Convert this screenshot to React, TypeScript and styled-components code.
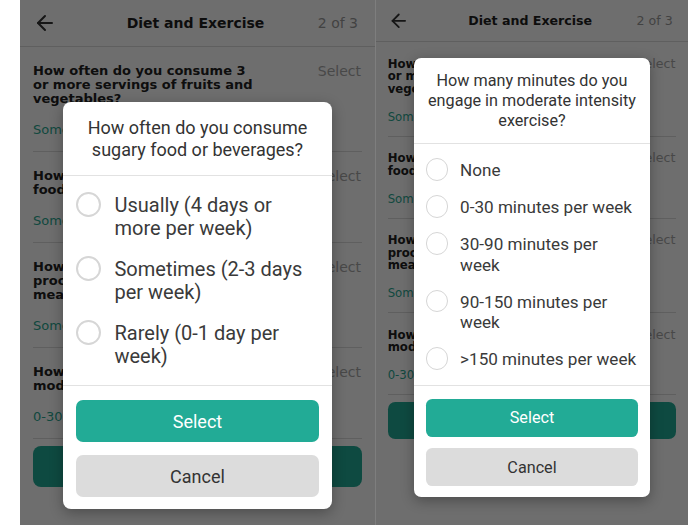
import React from "react";
import styled, { createGlobalStyle } from "styled-components";
import { ArrowLeft } from "lucide-react";

const GlobalStyle = createGlobalStyle`
  html, body {
    margin: 0;
    padding: 0;
    background: #fff;
  }
  body {
    font-family: Roboto, "Liberation Sans", sans-serif;
  }
`;

const questions = [
  {
    text: "How often do you consume 3\nor more servings of fruits and\nvegetables?",
    answer: "Sometimes (2-3 days per week)"
  },
  {
    text: "How often do you eat sugary\nfood or beverages?",
    answer: "Sometimes (2-3 days per week)"
  },
  {
    text: "How often do you eat\nprocessed or red\nmeat?",
    answer: "Sometimes (2-3 days per week)"
  },
  {
    text: "How many minutes of\nmoderate exercise?",
    answer: "0-30 minutes per week"
  }
];

const Page = styled.div`
  display: flex;
  height: 525px;
  padding-left: 20px;
  overflow: hidden;
`;

const Divider = styled.div`
  width: 1px;
  height: 525px;
  background: #7e7e7e;
  flex: none;
`;

const Screen = styled.div<{ $zoom: number; $width: number }>`
  position: relative;
  flex: none;
  zoom: ${({ $zoom }) => $zoom};
  width: ${({ $width }) => $width}px;
  height: ${({ $zoom }) => 525 / $zoom}px;
  background: #fff;
  overflow: hidden;
  font-family: "DejaVu Sans", Verdana, sans-serif;
`;

const Header = styled.header`
  display: grid;
  grid-template-columns: 1fr auto 1fr;
  align-items: center;
  height: 47px;
  box-sizing: border-box;
  padding: 0 17px 0 13px;
  border-bottom: 1px solid #dcdcdc;
  color: #333;
`;

const HeaderTitle = styled.div`
  font-size: 14px;
  font-weight: 700;
  color: #1e1e1e;
`;

const HeaderStep = styled.div`
  justify-self: end;
  font-size: 14px;
  color: #9a9a9a;
`;

const QuestionRow = styled.div`
  margin: 0 13px;
  padding: 17px 0 14px;
  border-bottom: 1px solid #dcdcdc;
`;

const QuestionTop = styled.div`
  display: flex;
  justify-content: space-between;
  align-items: flex-start;
  gap: 12px;
`;

const QuestionText = styled.div`
  font-size: 13px;
  line-height: 14px;
  font-weight: 700;
  color: #222;
  white-space: pre;
`;

const Placeholder = styled.span`
  font-size: 14px;
  line-height: 14px;
  color: #a8a8a8;
  margin-right: 1px;
`;

const Answer = styled.div`
  margin-top: 17px;
  font-size: 13px;
  line-height: 14px;
  color: #2aa892;
  white-space: nowrap;
`;

const ContinueButton = styled.div`
  margin: 7px 13px 0;
  height: 41px;
  border-radius: 8px;
  background: #22ab96;
  color: #fff;
  display: flex;
  align-items: center;
  justify-content: center;
  font-size: 15px;
  font-weight: 700;
`;

const Overlay = styled.div<{ $top: number }>`
  position: absolute;
  inset: 0;
  background: rgba(0, 0, 0, 0.57);
  display: flex;
  justify-content: center;
  align-items: flex-start;
  padding-top: ${({ $top }) => $top}px;
`;

const Modal = styled.div`
  width: 75.5%;
  background: #fff;
  border-radius: 8px;
  box-shadow: 0 4px 14px rgba(0, 0, 0, 0.3);
  font-family: Roboto, "Liberation Sans", sans-serif;
  overflow: hidden;
`;

const ModalTitle = styled.div`
  padding: 15px 12px 14px;
  text-align: center;
  font-size: 18px;
  line-height: 22px;
  color: #333;
  white-space: pre;
  border-bottom: 1px solid #e2e2e2;
`;

const OptionList = styled.div`
  display: flex;
  flex-direction: column;
  gap: 18px;
  padding: 18px 13px 17px;
  border-bottom: 1px solid #e2e2e2;
`;

const Option = styled.label`
  display: flex;
  align-items: flex-start;
  gap: 13px;
`;

const Radio = styled.span`
  flex: none;
  width: 25px;
  height: 25px;
  margin-top: -2px;
  box-sizing: border-box;
  border: 2px solid #d6d6d6;
  border-radius: 50%;
`;

const OptionLabel = styled.span<{ $size: number }>`
  font-size: ${({ $size }) => $size}px;
  line-height: 23px;
  color: #3a3a3a;
  white-space: pre;
`;

const Actions = styled.div`
  display: flex;
  flex-direction: column;
  gap: 13px;
  padding: 14px 13px 12px;
`;

const ActionButton = styled.button<{ $primary?: boolean }>`
  height: 42px;
  border: none;
  border-radius: 7px;
  font-family: inherit;
  font-size: 18px;
  background: ${({ $primary }) => ($primary ? "#22ab96" : "#dcdcdc")};
  color: ${({ $primary }) => ($primary ? "#fff" : "#333")};
`;

interface PhoneProps {
  zoom: number;
  width: number;
  modalTop: number;
  title: string;
  options: string[];
  optionSize: number;
}

const Phone = ({ zoom, width, modalTop, title, options, optionSize }: PhoneProps) => {
  return (
    <Screen $zoom={zoom} $width={width}>
      <Header>
        <ArrowLeft size={24} strokeWidth={2} color="#333" />
        <HeaderTitle>Diet and Exercise</HeaderTitle>
        <HeaderStep>2 of 3</HeaderStep>
      </Header>
      {questions.map((q) => (
        <QuestionRow key={q.text}>
          <QuestionTop>
            <QuestionText>{q.text}</QuestionText>
            <Placeholder>Select</Placeholder>
          </QuestionTop>
          <Answer>{q.answer}</Answer>
        </QuestionRow>
      ))}
      <ContinueButton>Continue</ContinueButton>
      <Overlay $top={modalTop}>
        <Modal>
          <ModalTitle>{title}</ModalTitle>
          <OptionList>
            {options.map((o) => (
              <Option key={o}>
                <Radio />
                <OptionLabel $size={optionSize}>{o}</OptionLabel>
              </Option>
            ))}
          </OptionList>
          <Actions>
            <ActionButton $primary>Select</ActionButton>
            <ActionButton>Cancel</ActionButton>
          </Actions>
        </Modal>
      </Overlay>
    </Screen>
  );
};

export default function App() {
  return (
    <Page>
      <GlobalStyle />
      <Phone
        zoom={1}
        width={355}
        modalTop={102}
        optionSize={20}
        title={"How often do you consume\nsugary food or beverages?"}
        options={[
          "Usually (4 days or\nmore per week)",
          "Sometimes (2-3 days\nper week)",
          "Rarely (0-1 day per\nweek)"
        ]}
      />
      <Divider />
      <Phone
        zoom={0.9}
        width={346.7}
        modalTop={64}
        optionSize={19}
        title={"How many minutes do you\nengage in moderate intensity\nexercise?"}
        options={[
          "None",
          "0-30 minutes per week",
          "30-90 minutes per\nweek",
          "90-150 minutes per\nweek",
          ">150 minutes per week"
        ]}
      />
    </Page>
  );
}
